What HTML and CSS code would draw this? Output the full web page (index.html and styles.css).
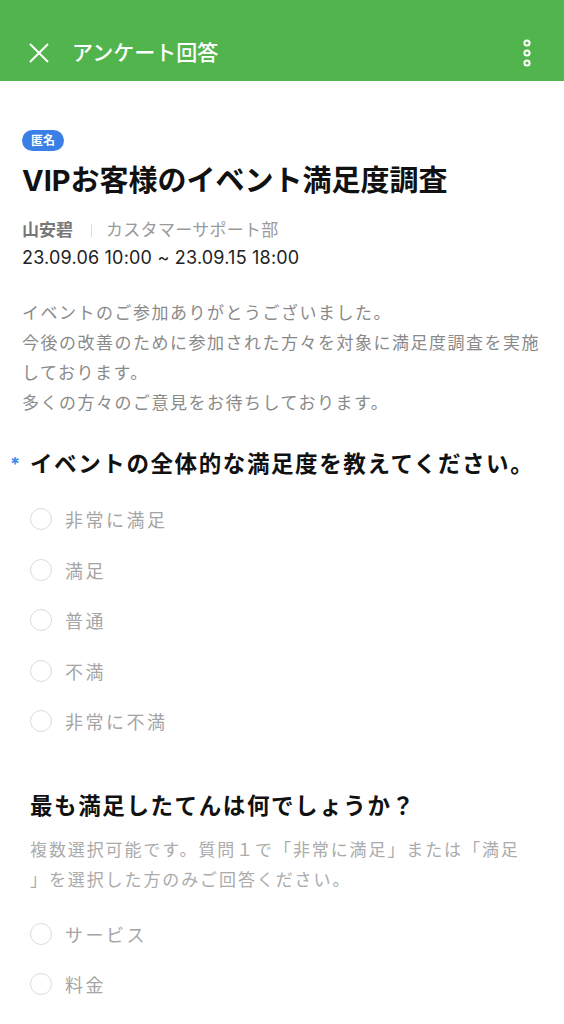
FILE: index.html
```html
<!DOCTYPE html>
<html lang="ja">
<head>
    <meta charset="UTF-8">
    <meta name="viewport" content="width=device-width, initial-scale=1.0">
    <title>アンケート回答</title>
    <link rel="stylesheet" href="styles.css">
</head>
<body>
    <div class="topbar">
        <svg class="close-icon" width="20" height="20" viewBox="0 0 20 20">
            <path d="M1 1 L19 19 M19 1 L1 19" stroke="#ffffff" stroke-width="2" fill="none"/>
        </svg>
        <h1>アンケート回答</h1>
        <svg class="more-icon" width="10" height="30" viewBox="0 0 10 30">
            <circle cx="5" cy="5" r="2.6" fill="none" stroke="#ffffff" stroke-width="2"/>
            <circle cx="5" cy="15" r="2.6" fill="none" stroke="#ffffff" stroke-width="2"/>
            <circle cx="5" cy="25" r="2.6" fill="none" stroke="#ffffff" stroke-width="2"/>
        </svg>
    </div>

    <div class="content">
        <span class="badge">匿名</span>
        <h2 class="survey-title">VIPお客様のイベント満足度調査</h2>
        <div class="meta">
            <span class="author">山安碧</span>
            <span class="divider"></span>
            <span class="dept">カスタマーサポート部</span>
        </div>
        <div class="period">23.09.06 10:00 ~ 23.09.15 18:00</div>
        <p class="description">
            イベントのご参加ありがとうございました。<br>
            今後の改善のために参加された方々を対象に満足度調査を実施<br>
            しております。<br>
            多くの方々のご意見をお待ちしております。
        </p>

        <div class="question">
            <div class="q-title"><span class="required">*</span>イベントの全体的な満足度を教えてください。</div>
            <div class="options">
                <div class="option"><span class="radio"></span>非常に満足</div>
                <div class="option"><span class="radio"></span>満足</div>
                <div class="option"><span class="radio"></span>普通</div>
                <div class="option"><span class="radio"></span>不満</div>
                <div class="option"><span class="radio"></span>非常に不満</div>
            </div>
        </div>

        <div class="question second">
            <div class="q-title">最も満足したてんは何でしょうか？</div>
            <p class="q-help">
                複数選択可能です。質問１で「非常に満足」または「満足<br>
                」を選択した方のみご回答ください。
            </p>
            <div class="options">
                <div class="option"><span class="radio"></span>サービス</div>
                <div class="option"><span class="radio"></span>料金</div>
            </div>
        </div>
    </div>
</body>
</html>
```

FILE: styles.css
```css
body {
    margin: 0;
    padding: 0;
    background-color: #ffffff;
    font-family: Inter, "Noto Sans CJK JP", sans-serif;
    color: #111111;
}
.topbar {
    height: 81px;
    box-sizing: border-box;
    padding: 24px 32px 0 29px;
    background-color: #52b44d;
    display: flex;
    align-items: center;
}
.topbar h1 {
    flex: 1;
    margin: 0 0 0 23px;
    font-size: 21px;
    font-weight: 500;
    color: #ffffff;
    line-height: 30px;
}
.close-icon {
    display: block;
}
.more-icon {
    display: block;
}
.content {
    padding: 49px 22px 0 22px;
}
.badge {
    display: inline-block;
    height: 21px;
    line-height: 21px;
    padding: 0 9px;
    border-radius: 11px;
    background-color: #3a7fe5;
    color: #ffffff;
    font-size: 12px;
    font-weight: 700;
    vertical-align: top;
}
.survey-title {
    margin: 10px 0 0 0;
    font-size: 29px;
    font-weight: 700;
    line-height: 40px;
    color: #111111;
}
.meta {
    margin-top: 15px;
    display: flex;
    align-items: center;
    font-size: 17px;
    line-height: 28px;
}
.author {
    font-weight: 700;
    color: #777777;
}
.divider {
    width: 1px;
    height: 13px;
    background-color: #dddddd;
    margin: 0 14px 0 18px;
}
.dept {
    color: #9a9a9a;
    letter-spacing: 0.3px;
}
.period {
    font-size: 18px;
    line-height: 28px;
    color: #222222;
    letter-spacing: 0.2px;
}
.description {
    margin: 26px 0 0 0;
    font-size: 17px;
    letter-spacing: 1.5px;
    line-height: 30px;
    color: #8a8a8a;
    white-space: nowrap;
}
.question {
    padding-left: 8px;
    margin-top: 30px;
}
.question.second {
    margin-top: 43px;
}
.q-title {
    display: flex;
    font-size: 22.5px;
    font-weight: 700;
    letter-spacing: 1.6px;
    line-height: 32px;
    color: #111111;
    white-space: nowrap;
}
.required {
    width: 20px;
    margin-left: -20px;
    color: #3a8ef0;
    font-size: 18px;
    letter-spacing: 0;
}
.q-help {
    margin: 13px 0 0 0;
    font-size: 17px;
    letter-spacing: 1.9px;
    line-height: 30px;
    color: #ababab;
    white-space: nowrap;
}
.options {
    margin-top: 14px;
}
.option {
    height: 50.5px;
    display: flex;
    align-items: center;
    font-size: 18px;
    letter-spacing: 2.5px;
    color: #a5a5a5;
}
.radio {
    width: 20px;
    height: 20px;
    border: 1.5px solid #dcdcdc;
    border-radius: 50%;
    margin-right: 13px;
}
```
